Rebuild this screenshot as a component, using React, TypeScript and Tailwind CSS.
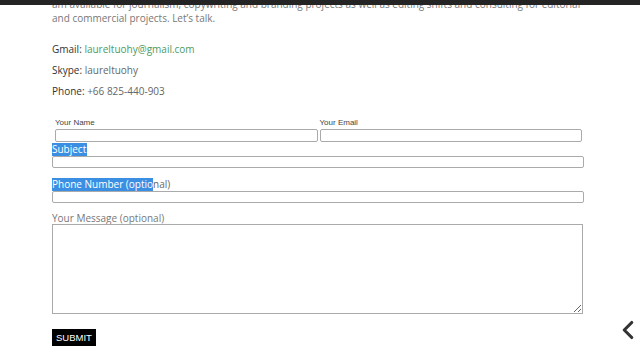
import { ChevronLeft } from "lucide-react";

const body = { fontFamily: '"Open Sans", "DejaVu Sans", sans-serif' };
const arial = { fontFamily: '"Liberation Sans", Arial, sans-serif' };

export default function App() {
  return (
    <div className="relative h-[360px] w-[640px] overflow-hidden bg-white" style={body}>
      {/* top bar covering the scrolled text */}
      <div className="absolute left-0 top-0 z-10 h-[5px] w-full bg-[#242424]" />

      <div className="ml-[52px] w-[532px]">
        <p className="-mt-[3px] whitespace-nowrap text-[10px] leading-[14px] text-[#777]">
          am available for journalism, copywriting and branding projects as well as editing shifts and consulting for editorial
          <br />
          and commercial projects. Let&rsquo;s talk.
        </p>

        <div className="mt-[17px] flex flex-col gap-[7px] text-[10px] leading-[14px] text-[#666]">
          <div>
            <span className="text-[#333]">Gmail:</span>{" "}
            <span className="text-[#4d9a5f]">laureltuohy@gmail.com</span>
          </div>
          <div>
            <span className="text-[#333]">Skype:</span> laureltuohy
          </div>
          <div>
            <span className="text-[#333]">Phone:</span> +66 825-440-903
          </div>
        </div>

        <form className="mt-[20px]">
          <div className="ml-[3px] flex w-[527px] gap-[2px]" style={arial}>
            <label className="flex flex-1 flex-col">
              <span className="h-[11px] text-[8px] leading-[10px] text-[#444]">Your Name</span>
              <input className="h-[13px] rounded-[2px] border border-[#aaa]" />
            </label>
            <label className="flex flex-1 flex-col">
              <span className="h-[11px] text-[8px] leading-[10px] text-[#444]">Your Email</span>
              <input className="h-[13px] rounded-[2px] border border-[#aaa]" />
            </label>
          </div>

          <label className="mt-[1px] flex flex-col">
            <span className="h-[13px] text-[10px] leading-[13px]">
              <span className="inline-block h-[13px] bg-[#3b8fe3] pr-[1px] text-white">Subject</span>
            </span>
            <input className="h-[12px] rounded-[2px] border border-[#aaa]" />
          </label>

          <label className="mt-[10px] flex flex-col">
            <span className="h-[13px] text-[10px] leading-[13px] text-[#666]">
              <span className="inline-block h-[13px] bg-[#3b8fe3] text-white">Phone Number (optio</span>nal)
            </span>
            <input className="h-[12px] rounded-[2px] border border-[#aaa]" />
          </label>

          <label className="mt-[10px] flex flex-col">
            <span className="h-[11px] text-[10px] leading-[11px] text-[#777]">Your Message (optional)</span>
            <textarea className="h-[90px] w-[531px] resize border border-[#aaa]" />
          </label>

          <button
            type="button"
            className="mt-[15px] h-[17px] bg-black px-[4px] text-[9.5px] leading-[17px] text-white"
            style={arial}
          >
            SUBMIT
          </button>
        </form>
      </div>

      <ChevronLeft className="absolute left-[613px] top-[315px] h-[30px] w-[30px] text-[#333]" strokeWidth={2.5} />
    </div>
  );
}
